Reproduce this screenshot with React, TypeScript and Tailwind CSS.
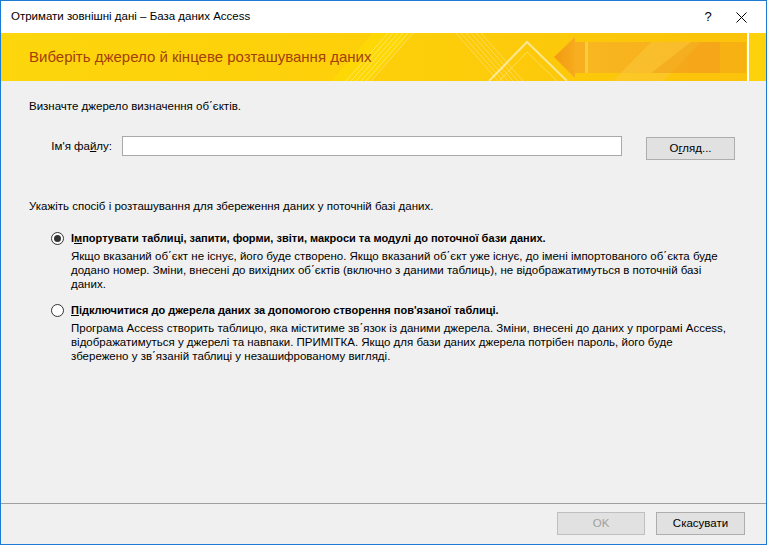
import React from "react";

const font = { fontFamily: '"Liberation Sans", Arial, sans-serif' };

function Radio({ checked }: { checked?: boolean }) {
  return (
    <span className="w-[13px] h-[13px] rounded-full border border-[#333333] bg-white flex items-center justify-center shrink-0">
      {checked && <span className="w-[7px] h-[7px] rounded-full bg-[#333333]" />}
    </span>
  );
}

function BannerArt() {
  const up = [0, 5, 10, 15, 20, 25];
  return (
    <svg className="absolute inset-0" width="765" height="48" viewBox="0 0 765 48">
      <defs>
        <linearGradient id="arrowHead" x1="0" x2="1" y1="0" y2="0">
          <stop offset="0" stopColor="#f39a12" />
          <stop offset="1" stopColor="#f6ab1d" />
        </linearGradient>
        <linearGradient id="shaft" x1="0" x2="1" y1="0" y2="0">
          <stop offset="0" stopColor="#f8b323" />
          <stop offset="1" stopColor="#f5a81b" />
        </linearGradient>
      </defs>
      {/* bright band */}
      <polygon points="330,48 372,0 410,0 368,48" fill="#ffe200" opacity="0.45" />
      {up.map((d) => (
        <line key={"u" + d} x1={345 + d} y1="48" x2={387 + d} y2="0" stroke="#ffffff" strokeWidth="1" opacity="0.35" />
      ))}
      {up.map((d) => (
        <line key={"d" + d} x1={455 + d} y1="0" x2={497 + d} y2="48" stroke="#ffffff" strokeWidth="1" opacity="0.3" />
      ))}
      {/* triangle outline */}
      <polyline points="488,48 526,9 566,48" fill="none" stroke="#ffffff" strokeWidth="2" opacity="0.55" />
      <polyline points="498,48 526,19 556,48" fill="none" stroke="#ffffff" strokeWidth="1" opacity="0.3" />
      {/* arrow */}
      <polygon points="553,24 574,4 574,45" fill="url(#arrowHead)" />
      <rect x="574" y="9" width="10" height="31" fill="#f7ae20" />
      <rect x="584" y="9" width="3" height="31" fill="#fbd04a" opacity="0.8" />
      <rect x="587" y="9" width="132" height="31" fill="url(#shaft)" opacity="0.85" />
      <polygon points="612,48 650,9 700,9 662,48" fill="#fcc83a" opacity="0.55" />
      <polygon points="650,40 690,9 745,9 745,40" fill="#f4a21a" opacity="0.55" />
      {/* white separator */}
      <rect x="746" y="0" width="2" height="48" fill="#ffffff" />
      <rect x="748" y="0" width="17" height="48" fill="#fdd20b" />
    </svg>
  );
}

export default function App() {
  return (
    <div
      className="w-[767px] h-[545px] border border-[#1c7ad0] bg-[#f0f0f0] flex flex-col text-[11.5px] text-black overflow-hidden"
      style={font}
    >
      {/* title bar */}
      <div className="h-[32px] bg-white flex items-center shrink-0">
        <span className="pl-[10px] flex-1">Отримати зовнішні дані – База даних Access</span>
        <span className="w-[34px] flex justify-center text-[13px]">?</span>
        <span className="w-[32px] flex justify-center">
          <svg width="11" height="11" viewBox="0 0 11 11">
            <path d="M0.5 0.5 L10.5 10.5 M10.5 0.5 L0.5 10.5" stroke="#000" strokeWidth="1" />
          </svg>
        </span>
        <span className="w-[9px]" />
      </div>

      {/* banner */}
      <div className="h-[48px] relative shrink-0 bg-gradient-to-r from-[#fdd60c] via-[#fdcf0a] to-[#fbc20b] flex items-center">
        <BannerArt />
        <span className="relative pl-[28px] text-[15px] text-[#a3400c]">
          Виберіть джерело й кінцеве розташування даних
        </span>
      </div>

      {/* body */}
      <div className="flex-1 px-[28px] pt-[17px]">
        <div className="leading-[16px]">Визначте джерело визначення об΄єктів.</div>

        <div className="flex items-start mt-[22px]">
          <span className="w-[83px] text-right leading-[20px]">
            Ім'я фа<u>й</u>лу:
          </span>
          <div className="ml-[10px] w-[500px] h-[20px] bg-white border border-[#a9a9a9]" />
          <button className="ml-[24px] mt-[1px] w-[89px] h-[23px] bg-[#e1e1e1] border border-[#adadad] flex items-center justify-center">
            <span>
              О<u>г</u>ляд...
            </span>
          </button>
        </div>

        <div className="leading-[16px] mt-[38px]">
          Укажіть спосіб і розташування для збереження даних у поточній базі даних.
        </div>

        <div className="mt-[16px] pl-[22px]">
          <div className="flex items-center gap-[7px] h-[16px]">
            <Radio checked />
            <span className="font-bold text-[11px]">
              І<u>м</u>портувати таблиці, запити, форми, звіти, макроси та модулі до поточної бази даних.
            </span>
          </div>
          <div className="pl-[20px] mt-[3px] leading-[14px] whitespace-nowrap">
            Якщо вказаний об΄єкт не існує, його буде створено. Якщо вказаний об΄єкт уже існує, до імені імпортованого об΄єкта буде
            <br />
            додано номер. Зміни, внесені до вихідних об΄єктів (включно з даними таблиць), не відображатимуться в поточній базі
            <br />
            даних.
          </div>

          <div className="flex items-center gap-[7px] h-[16px] mt-[11px]">
            <Radio />
            <span className="font-bold text-[11px]">
              <u>П</u>ідключитися до джерела даних за допомогою створення пов'язаної таблиці.
            </span>
          </div>
          <div className="pl-[20px] mt-[3px] leading-[14px] whitespace-nowrap">
            Програма Access створить таблицю, яка міститиме зв΄язок із даними джерела. Зміни, внесені до даних у програмі Access,
            <br />
            відображатимуться у джерелі та навпаки. ПРИМІТКА. Якщо для бази даних джерела потрібен пароль, його буде
            <br />
            збережено у зв΄язаній таблиці у незашифрованому вигляді.
          </div>
        </div>
      </div>

      {/* footer */}
      <div className="h-[41px] shrink-0 border-t border-[#a0a0a0] flex justify-end items-start pt-[8px] pr-[21px] gap-[11px]">
        <button className="w-[88px] h-[23px] bg-[#e1e1e1] border border-[#bfbfbf] text-[#a0a0a0]">OK</button>
        <button className="w-[89px] h-[23px] bg-[#e1e1e1] border border-[#adadad]">Скасувати</button>
      </div>
    </div>
  );
}
